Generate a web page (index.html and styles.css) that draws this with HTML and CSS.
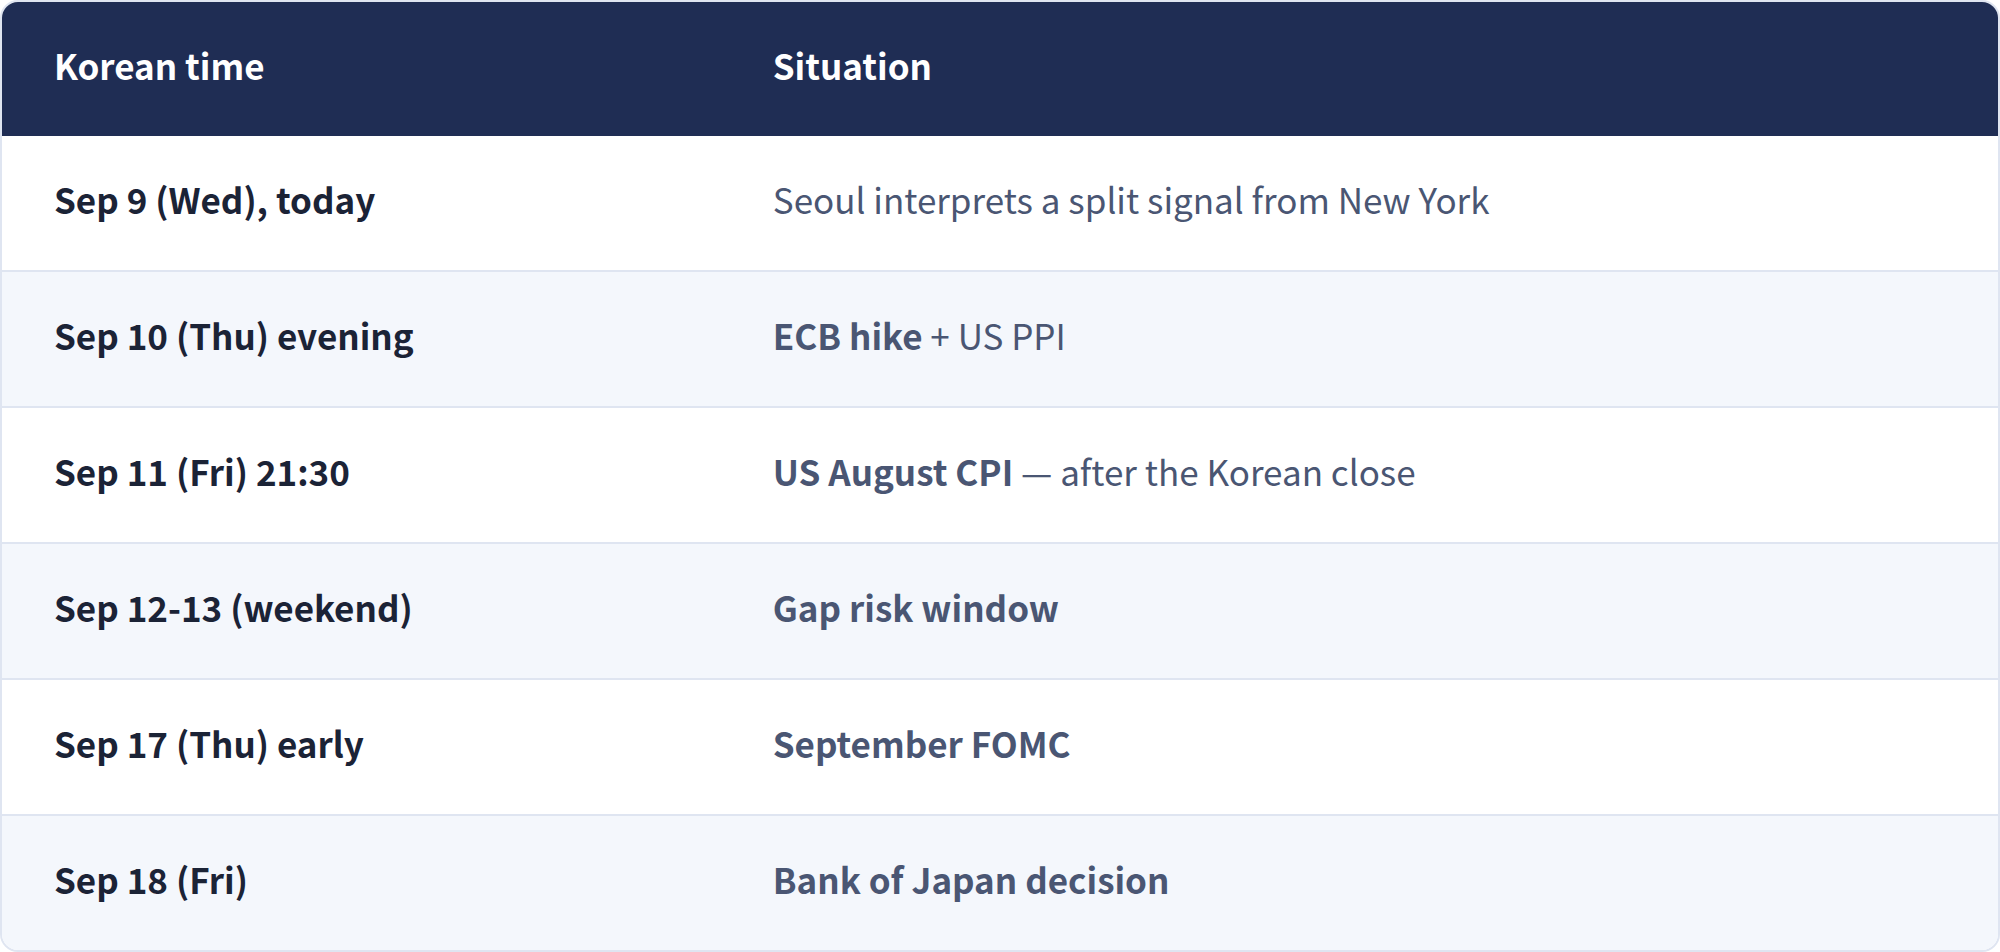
FILE: index.html
```html
<!DOCTYPE html>
<html lang="en">
<head>
<meta charset="utf-8">
<title>Korean time schedule</title>
<link rel="stylesheet" href="styles.css">
</head>
<body>
<div class="card">
  <table class="schedule">
    <thead>
      <tr>
        <th class="col-time">Korean time</th>
        <th class="col-sit">Situation</th>
      </tr>
    </thead>
    <tbody>
      <tr>
        <td class="time">Sep 9 (Wed), today</td>
        <td class="sit">Seoul interprets a split signal from New York</td>
      </tr>
      <tr class="alt">
        <td class="time">Sep 10 (Thu) evening</td>
        <td class="sit"><strong>ECB hike</strong> + US PPI</td>
      </tr>
      <tr>
        <td class="time">Sep 11 (Fri) 21:30</td>
        <td class="sit"><strong>US August CPI</strong> — after the Korean close</td>
      </tr>
      <tr class="alt">
        <td class="time">Sep 12-13 (weekend)</td>
        <td class="sit"><strong>Gap risk window</strong></td>
      </tr>
      <tr>
        <td class="time">Sep 17 (Thu) early</td>
        <td class="sit"><strong>September FOMC</strong></td>
      </tr>
      <tr class="alt">
        <td class="time">Sep 18 (Fri)</td>
        <td class="sit"><strong>Bank of Japan decision</strong></td>
      </tr>
    </tbody>
  </table>
</div>
</body>
</html>
```

FILE: styles.css
```css
html, body {
  margin: 0;
  padding: 0;
  background: #ffffff;
}

body {
  font-family: "Noto Sans CJK KR", "Noto Sans", sans-serif;
}

.card {
  box-sizing: border-box;
  width: 100%;
  height: 100vh;
  border: 2px solid #dfe5f1;
  border-radius: 18px;
  overflow: hidden;
  background: #ffffff;
}

.schedule {
  width: 100%;
  height: 100%;
  border-collapse: collapse;
  table-layout: fixed;
}

.schedule th,
.schedule td {
  text-align: left;
  vertical-align: middle;
  padding: 0 52px 8px;
  font-size: 35px;
  line-height: 1.2;
}

.schedule thead th {
  background: #1f2d54;
  color: #ffffff;
  font-weight: 700;
  height: 126px;
}

.col-time {
  width: 30.8%;
}

.schedule tbody tr {
  background: #ffffff;
}

.schedule tbody tr + tr td {
  border-top: 2px solid #dfe5f1;
}

.schedule tbody tr.alt {
  background: #f4f7fc;
}

.time {
  color: #1b2336;
  font-weight: 700;
  height: 124px;
}

.sit {
  color: #4a5673;
  font-weight: 400;
}

.sit strong {
  font-weight: 700;
}
```
